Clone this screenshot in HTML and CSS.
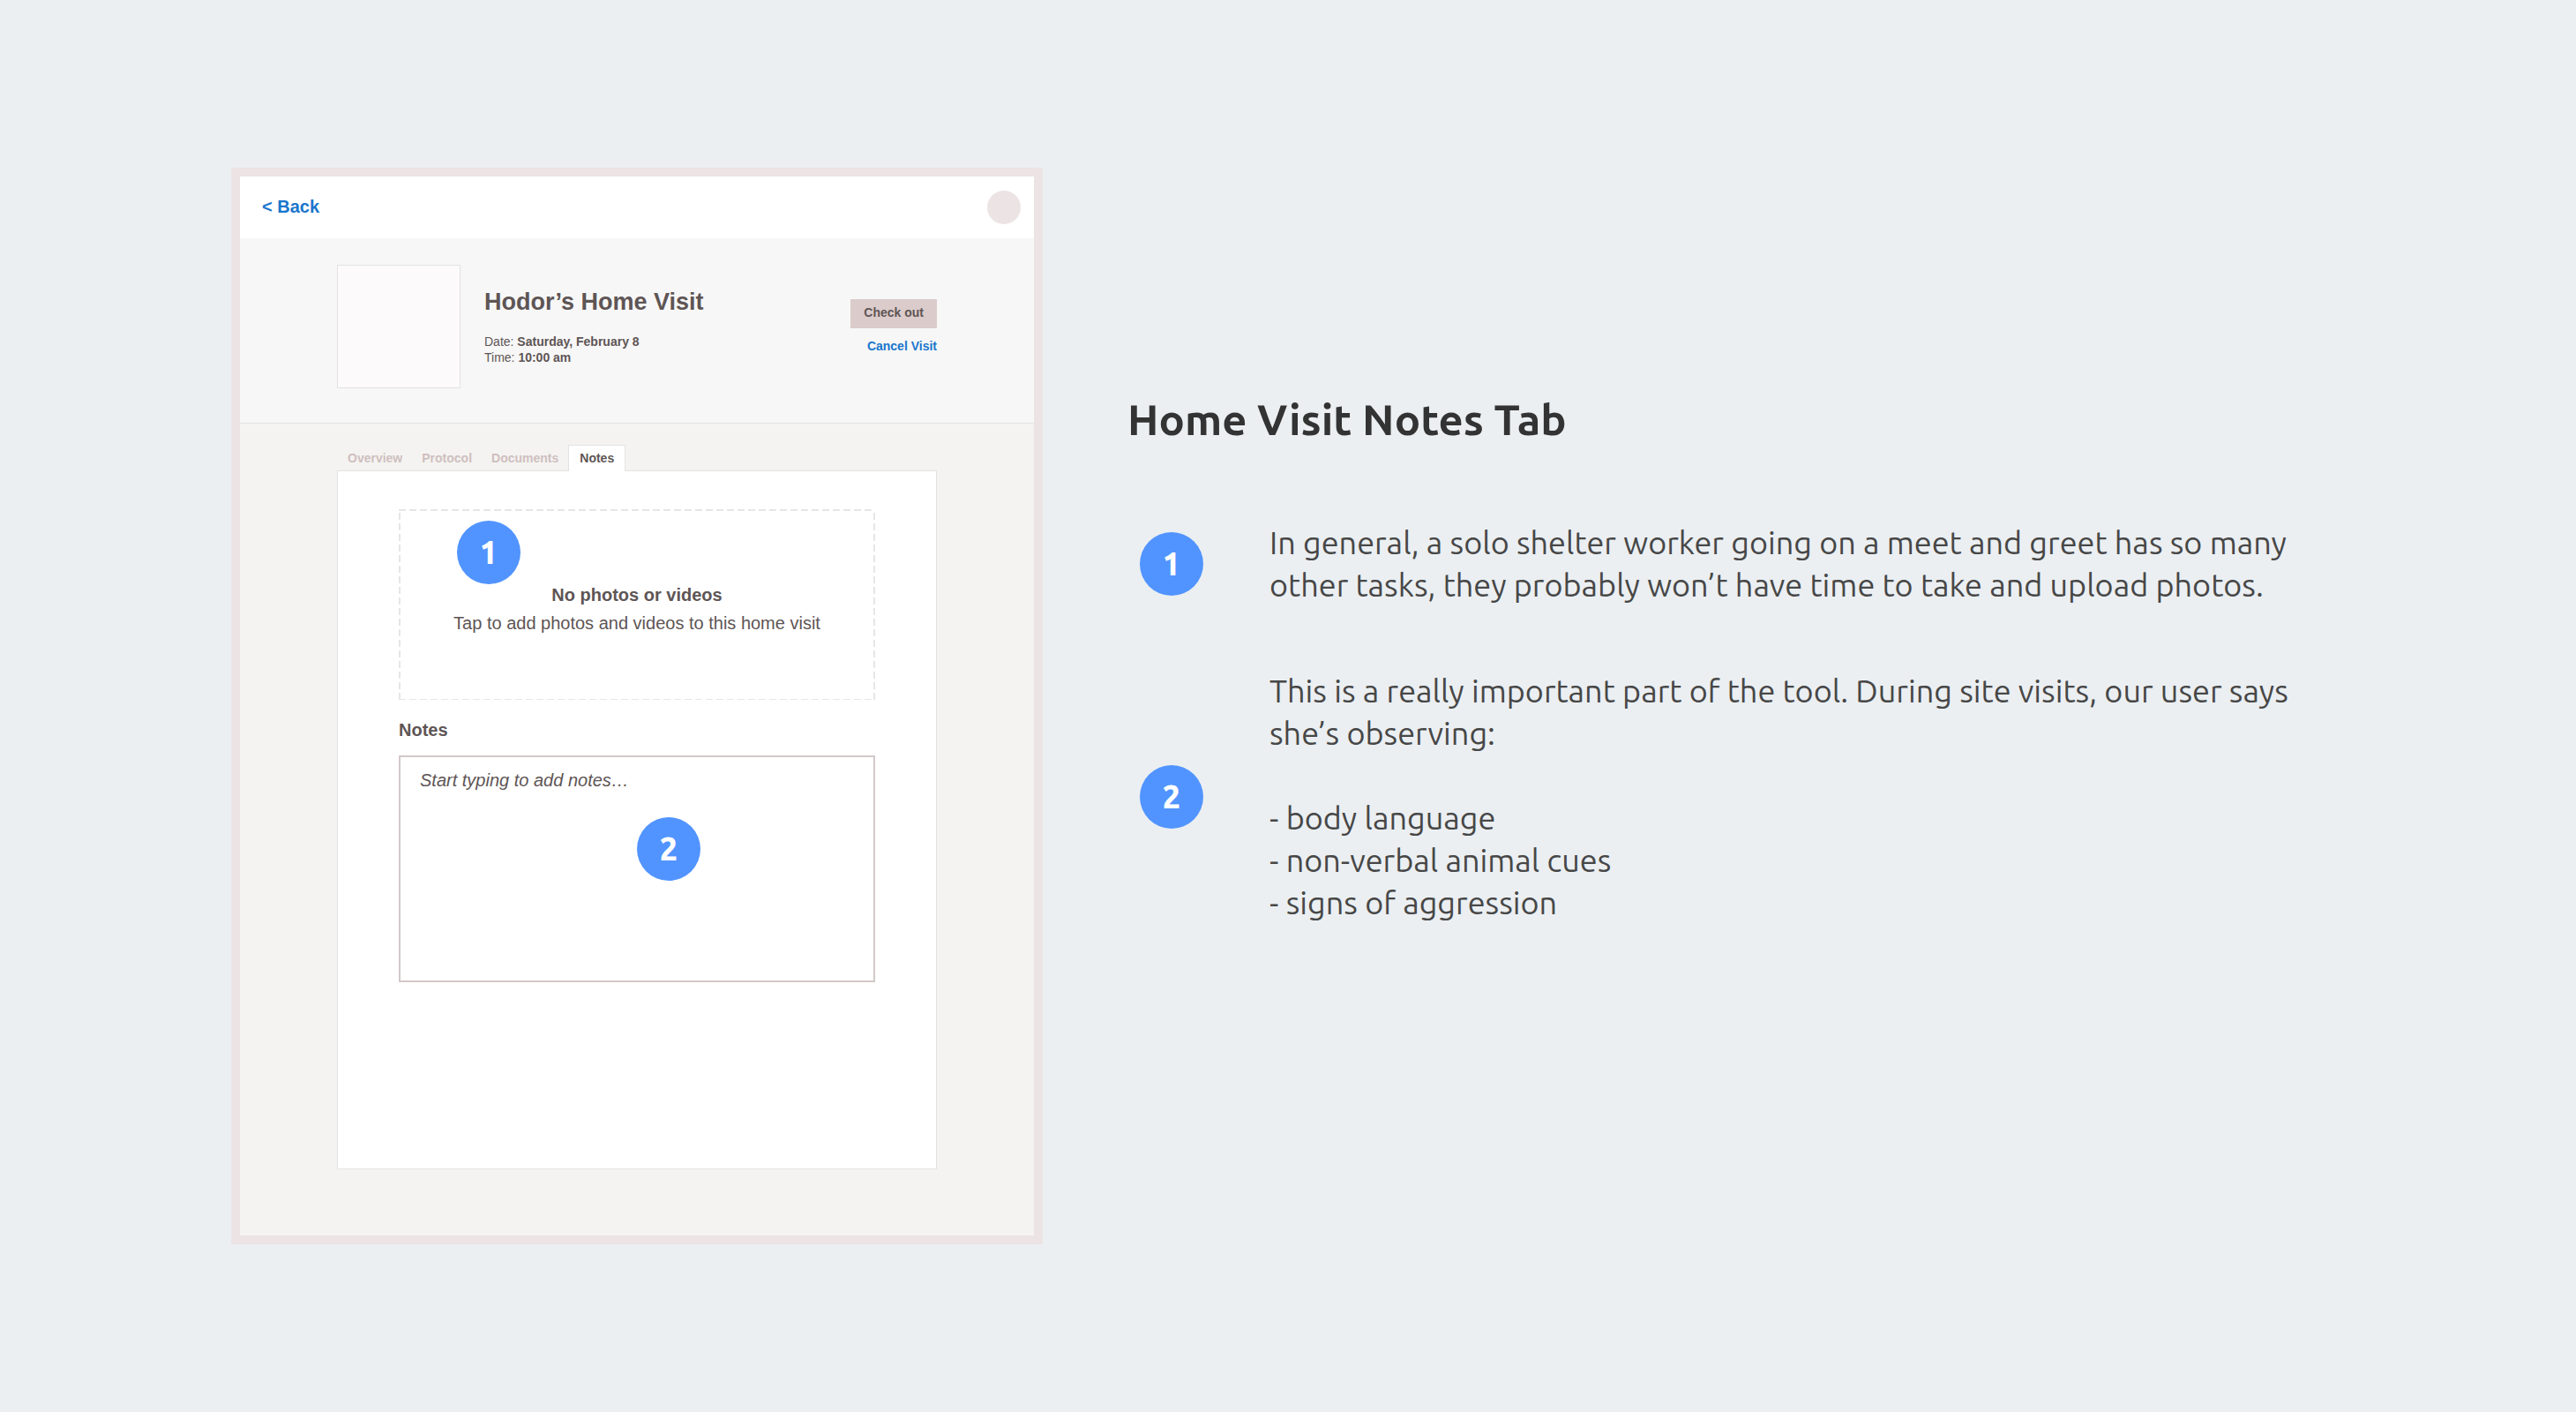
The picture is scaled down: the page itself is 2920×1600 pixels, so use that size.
FILE: index.html
```html
<!DOCTYPE html>
<html lang="en">
<head>
  <meta charset="utf-8">
  <meta name="viewport" content="width=device-width, initial-scale=1">
  <title>Home Visit Notes Tab</title>
  <link rel="stylesheet" href="styles.css">
</head>
<body>
  <main class="stage">
    <section class="tablet" aria-label="Home visit screen">
      <header class="topbar">
        <a class="back" href="#">&lt; Back</a>
        <span class="avatar"></span>
      </header>

      <div class="summary">
        <div class="photo"></div>
        <div class="details">
          <h2 class="visit-title">Hodor’s Home Visit</h2>
          <p class="meta">Date: <strong>Saturday, February 8</strong></p>
          <p class="meta">Time: <strong>10:00 am</strong></p>
        </div>
        <div class="actions">
          <button class="checkout" type="button">Check out</button>
          <a class="cancel" href="#">Cancel Visit</a>
        </div>
      </div>

      <div class="content">
        <div class="tabs" role="tablist">
          <button class="tab" type="button" role="tab">Overview</button>
          <button class="tab" type="button" role="tab">Protocol</button>
          <button class="tab" type="button" role="tab">Documents</button>
          <button class="tab tab-active" type="button" role="tab" aria-selected="true">Notes</button>
        </div>
        <div class="panel" role="tabpanel">
          <div class="annotated">
            <button class="dropzone" type="button">
              <strong>No photos or videos</strong>
              <span>Tap to add photos and videos to this home visit</span>
            </button>
            <span class="marker marker-photos">1</span>
          </div>
          <label class="notes-label" for="notes">Notes</label>
          <div class="annotated">
            <textarea class="notes" id="notes" placeholder="Start typing to add notes…"></textarea>
            <span class="marker marker-notes">2</span>
          </div>
        </div>
      </div>
    </section>

    <section class="legend">
      <h1 class="legend-title">Home Visit Notes Tab</h1>
      <div class="legend-rows">
        <div class="legend-row">
          <span class="marker">1</span>
          <p>In general, a solo shelter worker going on a meet and greet has so many other tasks, they probably won’t have time to take and upload photos.</p>
        </div>
        <div class="legend-row">
          <span class="marker">2</span>
          <div class="legend-text">
            <p>This is a really important part of the tool. During site visits, our user says she’s observing:</p>
            <ul class="observations">
              <li>- body language</li>
              <li>- non-verbal animal cues</li>
              <li>- signs of aggression</li>
            </ul>
          </div>
        </div>
      </div>
    </section>
  </main>
</body>
</html>
```
FILE: styles.css
```css
:root {
  --page: #ebeff2;
  --frame: #ece3e4;
  --line: #e3e3e3;
  --ink: #5e5555;
  --link: #1a76cc;
  --marker: #5194ff;
  --ui-font: "Liberation Sans", Arial, sans-serif;
  --note-font: Ubuntu, "Noto Sans", sans-serif;
}

* {
  box-sizing: border-box;
}

body {
  margin: 0;
  background: var(--page);
  font-family: var(--ui-font);
  color: var(--ink);
}

h1, h2, p, ul {
  margin: 0;
  padding: 0;
}

button, textarea {
  font: inherit;
  color: inherit;
}

a {
  color: var(--link);
  font-weight: 700;
  text-decoration: none;
}

.stage {
  display: flex;
  align-items: flex-start;
  gap: 96px;
  padding: 190px 262px;
}

/* Tablet screen */

.tablet {
  flex: 0 1 920px;
  display: flex;
  flex-direction: column;
  min-height: 1220px;
  border: 10px solid var(--frame);
  background: #f4f3f1;
}

.topbar {
  display: flex;
  align-items: center;
  justify-content: space-between;
  height: 70px;
  padding: 0 15px 0 25px;
  background: #fff;
}

.back {
  padding-bottom: 2px;
  font-size: 20px;
  line-height: 24px;
}

.avatar {
  width: 38px;
  height: 38px;
  border-radius: 50%;
  background: var(--frame);
}

.summary {
  display: flex;
  align-items: center;
  padding: 30px 110px 39px;
  border-bottom: 1px solid var(--line);
  background: #f7f7f7;
}

.photo {
  width: 140px;
  height: 140px;
  margin-right: 27px;
  border: 1px solid var(--line);
  background: #fcfafb;
}

.visit-title {
  margin-bottom: 20px;
  font-size: 27px;
  line-height: 32px;
}

.meta {
  font-size: 14px;
  line-height: 18px;
}

.actions {
  display: flex;
  flex-direction: column;
  align-items: flex-end;
  gap: 11px;
  margin-left: auto;
  font-size: 14px;
  font-weight: 700;
  line-height: 18px;
}

.checkout {
  padding: 6px 15px 9px;
  border: 0;
  background: #dbcbcb;
}

.content {
  flex: 1;
  display: flex;
  flex-direction: column;
  padding: 24px 110px 75px;
}

.tabs {
  position: relative;
  display: flex;
  margin-bottom: -1px;
  padding-left: 1px;
}

.tab {
  padding: 5px 11px 6px;
  border: 1px solid transparent;
  border-width: 1px 0 0;
  background: none;
  color: #cfbfbf;
  font-size: 14px;
  font-weight: 700;
  line-height: 18px;
}

.tab-active {
  padding: 5px 12px 6px;
  border-color: var(--line);
  border-width: 1px 1px 0;
  background: #fff;
  color: var(--ink);
}

.panel {
  flex: 1;
  padding: 43px 69px;
  border: 1px solid var(--line);
  background: #fff;
}

.annotated {
  position: relative;
}

.dropzone {
  --dash: #e6e6e6 0 8px, transparent 8px 12px;
  display: flex;
  flex-direction: column;
  align-items: center;
  width: 100%;
  height: 216px;
  padding: 81px 20px 0;
  border: 0;
  background:
    repeating-linear-gradient(90deg, var(--dash)) top / 100% 2px no-repeat,
    repeating-linear-gradient(90deg, var(--dash)) bottom / 100% 1px no-repeat,
    repeating-linear-gradient(0deg, var(--dash)) left / 2px 100% no-repeat,
    repeating-linear-gradient(0deg, var(--dash)) right / 2px 100% no-repeat;
  font-size: 20px;
  line-height: 32px;
}

.notes-label {
  display: block;
  margin: 22px 0 17px;
  font-size: 20px;
  font-weight: 700;
  line-height: 24px;
}

.notes {
  display: block;
  width: 100%;
  height: 257px;
  padding: 14px 22px;
  border: 2px solid #d3c8c8;
  background: #fff;
  font-size: 20px;
  line-height: 24px;
  resize: none;
}

.notes::placeholder {
  color: var(--ink);
  font-style: italic;
}

/* Numbered markers */

.marker {
  display: flex;
  flex: none;
  align-items: center;
  justify-content: center;
  width: 72px;
  height: 72px;
  border-radius: 50%;
  background: var(--marker);
  color: #fff;
  font-family: var(--note-font);
  font-size: 36px;
  font-weight: 800;
  line-height: 48px;
}

.marker-photos {
  position: absolute;
  top: 13px;
  left: 66px;
}

.marker-notes {
  position: absolute;
  top: 70px;
  left: 50%;
}

/* Legend */

.legend {
  flex: 1;
  padding-top: 255px;
  font-family: var(--note-font);
  color: #474747;
}

.legend-title {
  margin-bottom: 86px;
  color: #333;
  font-size: 49px;
  font-weight: 600;
  line-height: 60px;
}

.legend-rows {
  display: grid;
  gap: 72px;
  padding-left: 14px;
}

.legend-row {
  display: flex;
  align-items: center;
  gap: 75px;
  max-width: 1340px;
  font-size: 36px;
  line-height: 48px;
}

.legend-text {
  display: grid;
  gap: 48px;
}

.observations {
  list-style: none;
}
```
